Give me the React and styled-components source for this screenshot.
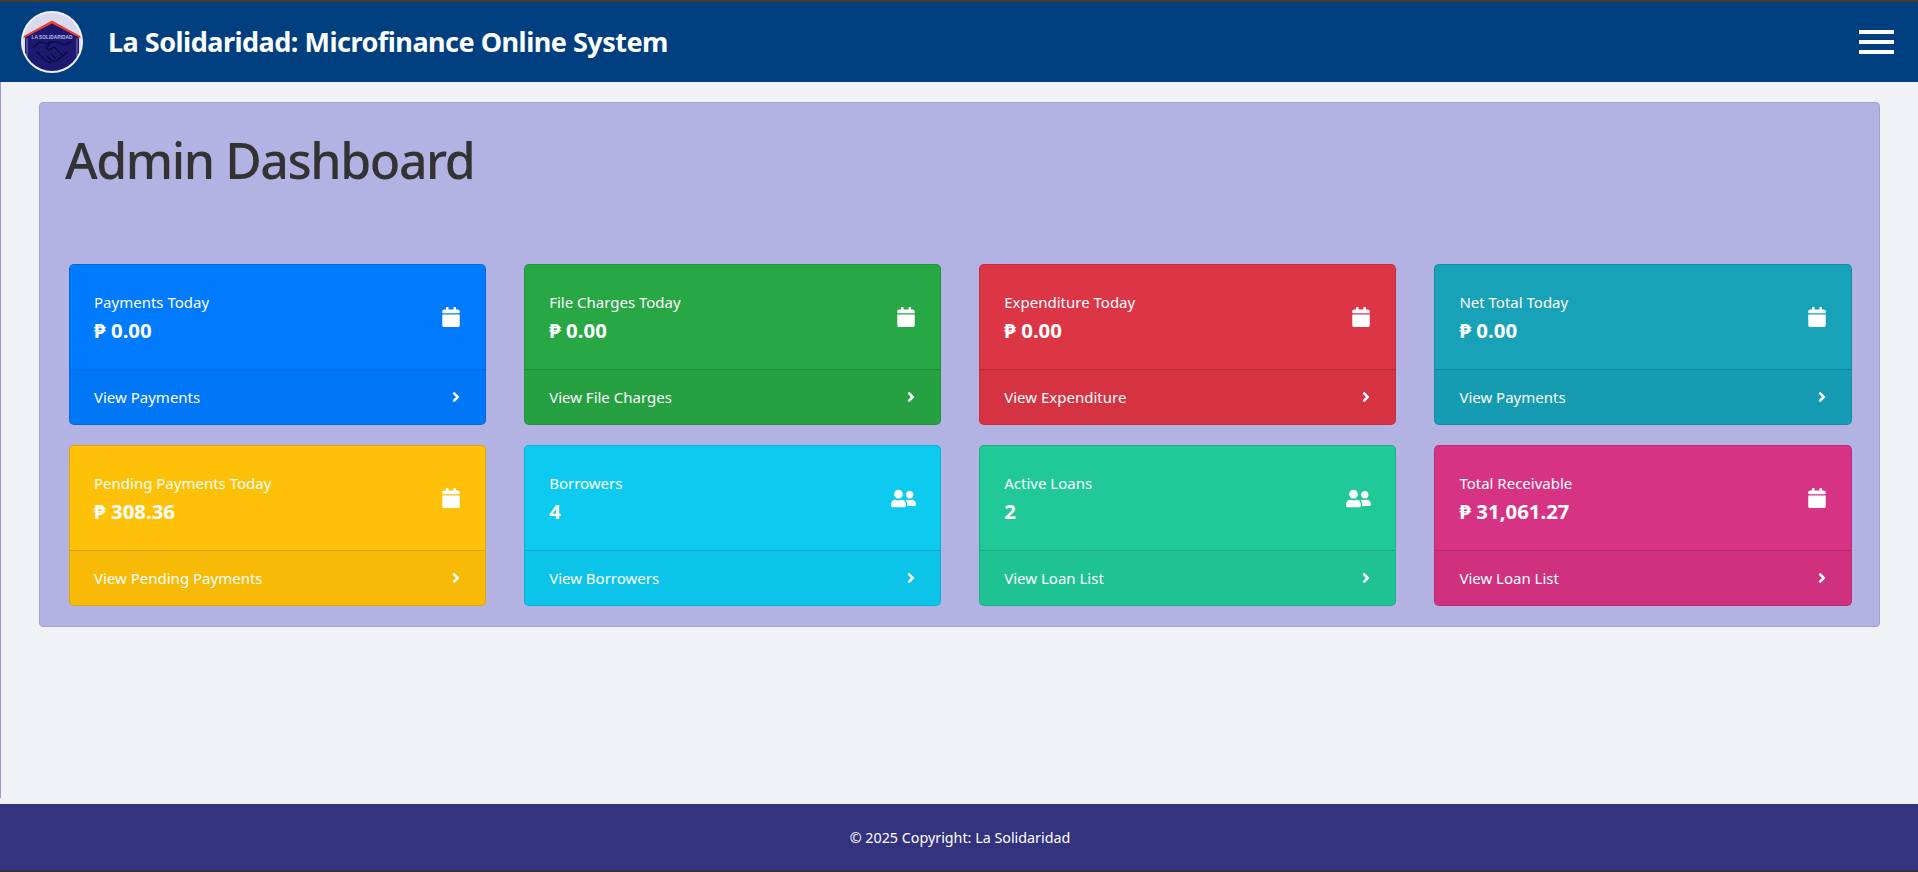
import React from 'react'
import styled, { createGlobalStyle } from 'styled-components'
import { FaCalendar, FaUserFriends, FaAngleRight } from 'react-icons/fa'

const GlobalStyle = createGlobalStyle`
  html, body {
    margin: 0;
    padding: 0;
    background: #f0f2f6;
    font-family: 'Noto Sans', 'Open Sans', sans-serif;
  }
  * {
    box-sizing: border-box;
  }
`

const cards = [
  { title: 'Payments Today', value: '₱ 0.00', link: 'View Payments', color: '#007bff', icon: 'calendar' },
  { title: 'File Charges Today', value: '₱ 0.00', link: 'View File Charges', color: '#28a745', icon: 'calendar' },
  { title: 'Expenditure Today', value: '₱ 0.00', link: 'View Expenditure', color: '#dc3545', icon: 'calendar' },
  { title: 'Net Total Today', value: '₱ 0.00', link: 'View Payments', color: '#17a2b8', icon: 'calendar' },
  { title: 'Pending Payments Today', value: '₱ 308.36', link: 'View Pending Payments', color: '#ffc107', icon: 'calendar' },
  { title: 'Borrowers', value: '4', link: 'View Borrowers', color: '#0dcaf0', icon: 'users' },
  { title: 'Active Loans', value: '2', link: 'View Loan List', color: '#20c997', icon: 'users' },
  { title: 'Total Receivable', value: '₱ 31,061.27', link: 'View Loan List', color: '#d63384', icon: 'calendar' },
]

const Logo = () => (
  <LogoSvg viewBox="0 0 64 64">
    <defs>
      <clipPath id="logo-disc">
        <circle cx="32" cy="32" r="29" />
      </clipPath>
    </defs>
    <circle cx="32" cy="32" r="31" fill="#f1f1fa" />
    <g clipPath="url(#logo-disc)">
      <rect width="64" height="64" fill="#d9d9ee" />
      <path d="M5 26 L32 11 L59 26 V52 L32 64 L5 52 Z" fill="#1d1870" />
      <path d="M2 27 L32 10.5 L62 27 L62 29 L32 13.5 L2 29 Z" fill="#ee4035" />
      <path d="M7 28 V54 M57 28 V54" stroke="#7d7ac0" strokeWidth="1" />
    </g>
    <text x="32" y="28.5" textAnchor="middle" fontSize="4.8" fontWeight="700" fill="#bdbbe8" fontFamily="'Liberation Sans', sans-serif">
      LA SOLIDARIDAD
    </text>
    <g fill="none" stroke="#0b083c" strokeWidth="1.1" strokeLinejoin="round" strokeLinecap="round">
      <path d="M13 37 L20 32 L27 34 L31 32 L37 32 L45 35 L51 32" />
      <path d="M17 42 L25 50 L30 53 L33 51 L37 51 L40 48 L43 46 L47 42" />
      <path d="M31 32 L26 38 L29 40 L34 37 L43 46" />
      <path d="M27 46 L31 50 M31 44 L35 48" />
    </g>
  </LogoSvg>
)

const StatCard = ({ title, value, link, color, icon }) => (
  <Card $color={color}>
    <CardBody>
      <div>
        <CardTitle>{title}</CardTitle>
        <CardValue>{value}</CardValue>
      </div>
      <CardIcon>{icon === 'users' ? <FaUserFriends size={25} /> : <FaCalendar size={20} />}</CardIcon>
    </CardBody>
    <CardFooter>
      <span>{link}</span>
      <Chevron>
        <FaAngleRight size={16} />
      </Chevron>
    </CardFooter>
  </Card>
)

const App = () => {
  return (
    <Page>
      <GlobalStyle />
      <Header>
        <Brand>
          <Logo />
          <BrandName>La Solidaridad: Microfinance Online System</BrandName>
        </Brand>
        <Burger>
          <span />
          <span />
          <span />
        </Burger>
      </Header>
      <Main>
        <Panel>
          <Title>Admin Dashboard</Title>
          <CardGrid>
            {cards.map((card) => (
              <StatCard key={card.title} {...card} />
            ))}
          </CardGrid>
        </Panel>
      </Main>
      <Footer>© 2025 Copyright: La Solidaridad</Footer>
    </Page>
  )
}

const Page = styled.div`
  display: flex;
  flex-direction: column;
  height: 872px;
  overflow: hidden;
`

const Header = styled.header`
  display: flex;
  align-items: center;
  justify-content: space-between;
  flex: none;
  height: 82px;
  padding: 0 24px 0 20px;
  background: #003f7f;
  border-top: 2px solid #4a3a2a;
`

const Brand = styled.div`
  display: flex;
  align-items: center;
  gap: 24px;
`

const LogoSvg = styled.svg`
  display: block;
  width: 64px;
  height: 64px;
`

const BrandName = styled.div`
  margin-top: 1px;
  color: #fff;
  font-size: 27px;
  font-weight: 700;
  letter-spacing: -0.5px;
  line-height: 1.2;
`

const Burger = styled.div`
  display: flex;
  flex-direction: column;
  gap: 6px;
  span {
    display: block;
    width: 35px;
    height: 4px;
    background: #fff;
  }
`

const Main = styled.main`
  flex: 1;
  margin-bottom: 6px;
  padding: 20px 38px 0 38px;
  border-left: 1px solid #9a9ad4;
`

const Panel = styled.section`
  height: 525px;
  padding: 26px 27.5px 0 29px;
  background: #b2b2e3;
  border: 1px solid #a2a2d2;
  border-radius: 4px;
`

const Title = styled.h1`
  margin: 0 0 73px -4px;
  color: #333;
  font-size: 50px;
  font-weight: 500;
  letter-spacing: -1.45px;
  line-height: 62px;
`

const CardGrid = styled.div`
  display: grid;
  grid-template-columns: repeat(4, 1fr);
  gap: 20px 38px;
`

const Card = styled.article`
  display: flex;
  flex-direction: column;
  height: 161px;
  color: #fff;
  background: ${(props) => props.$color};
  border: 1px solid rgba(0, 0, 0, 0.125);
  border-radius: 5px;
  overflow: hidden;
`

const CardBody = styled.div`
  display: flex;
  align-items: center;
  justify-content: space-between;
  flex: none;
  height: 104px;
  padding: 0 24px;
`

const CardTitle = styled.div`
  margin-top: -2px;
  font-size: 15px;
  line-height: 22px;
`

const CardValue = styled.div`
  margin-top: 5px;
  font-size: 20.4px;
  font-weight: 700;
  line-height: 24px;
`

const CardIcon = styled.div`
  display: flex;
`

const CardFooter = styled.div`
  display: flex;
  align-items: center;
  justify-content: space-between;
  flex: 1;
  padding: 0 25px 0 24px;
  font-size: 15px;
  background: rgba(0, 0, 0, 0.03);
  border-top: 1px solid rgba(0, 0, 0, 0.125);
`

const Chevron = styled.span`
  display: flex;
  margin-right: -4px;
`

const Footer = styled.footer`
  display: flex;
  align-items: center;
  justify-content: center;
  flex: none;
  height: 68px;
  padding: 1px 0 0 2px;
  color: #fff;
  font-size: 14.3px;
  background: #33337f;
  border-bottom: 2px solid #333;
`

export default App
